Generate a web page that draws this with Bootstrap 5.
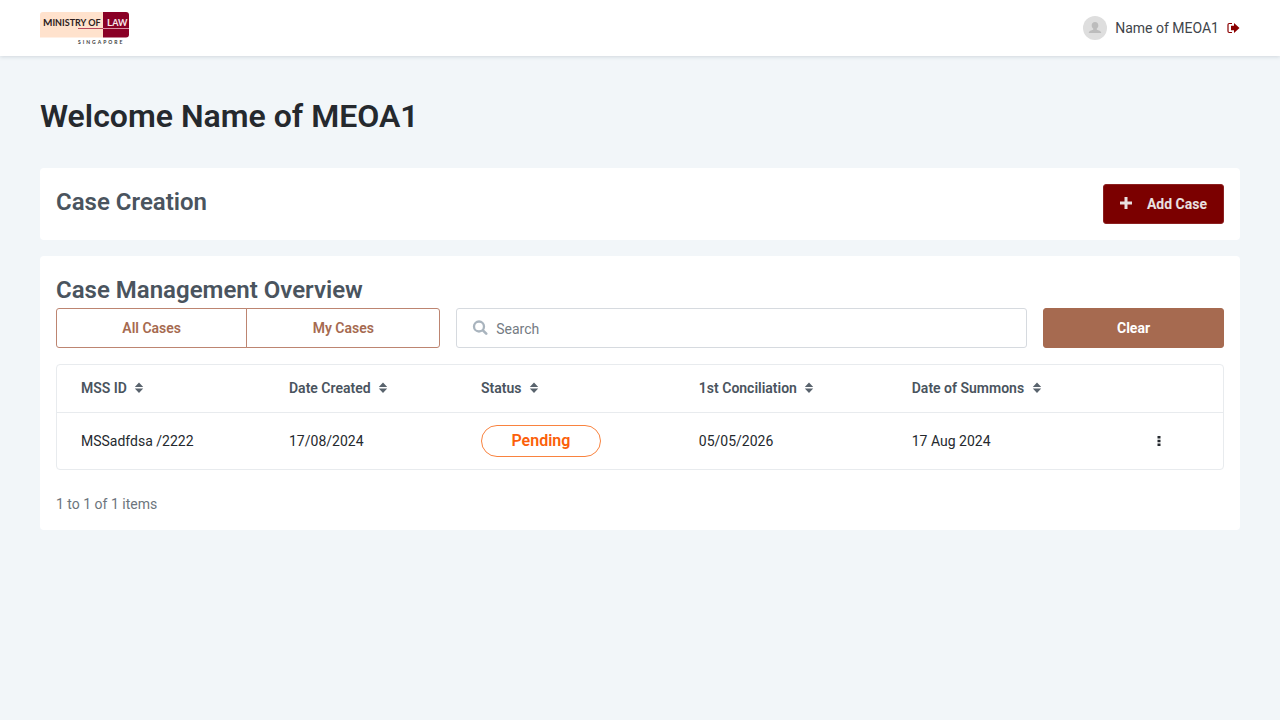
<!DOCTYPE html>
<html lang="en">
<head>
<meta charset="utf-8">
<meta name="viewport" content="width=device-width, initial-scale=1">
<title>Case Management</title>
<link href="https://cdn.jsdelivr.net/npm/bootstrap@5.3.0/dist/css/bootstrap.min.css" rel="stylesheet">
<style>
  body { font-family: Roboto, "Liberation Sans", sans-serif; font-size: 14px; line-height: 24px; color: #25292e; background: #f2f6f9; }
  .topbar { height: 56px; box-shadow: 0 1px 4px rgba(40, 60, 80, .16); }
  .page-gutter { padding-left: 40px; padding-right: 40px; }
  .avatar { width: 24px; height: 24px; }
  .user-name { color: #3f454b; }
  .welcome { font-size: 32px; line-height: 40px; font-weight: 600; margin: 40px 0 32px; }
  .panel { background: #fff; border-radius: 4px; padding: 16px; }
  .panel-title { font-size: 24px; line-height: 36px; font-weight: 600; color: #4a545e; margin: 0; }
  .btn { --bs-btn-font-size: 14px; --bs-btn-font-weight: 600; --bs-btn-border-radius: 3px; --bs-btn-line-height: 24px; height: 40px; }
  .btn-add { --bs-btn-bg: #7b0000; --bs-btn-color: #e9e0e0; --bs-btn-border-color: #8b2020; --bs-btn-hover-bg: #650000; --bs-btn-hover-color: #fff; --bs-btn-padding-x: 16px; font-weight: 700; gap: 15px; }
  .btn-clear { --bs-btn-bg: #a66a50; --bs-btn-color: #fff; --bs-btn-border-color: #a66a50; --bs-btn-hover-bg: #8f5a43; --bs-btn-hover-color: #fff; font-weight: 700; width: 181px; }
  .btn-seg { --bs-btn-color: #a66a50; --bs-btn-border-color: #bd8571; --bs-btn-hover-bg: #f8f0ed; --bs-btn-hover-color: #a66a50; flex: 1 1 0; }
  .filters { gap: 16px; }
  .segments { width: 32.9%; }
  .search-box { height: 40px; border: 1px solid #d6dadf; border-radius: 3px; padding: 0 15px; }
  .search-box input { font-size: 14px; border: 0; outline: 0; background: transparent; padding: 0; margin-top: 2px; }
  .search-box input::placeholder { color: #747b82; opacity: 1; }
  .table-frame { border: 1px solid #e8ebee; border-radius: 4px; }
  .table-frame table { table-layout: fixed; --bs-table-color: #25292e; --bs-table-bg: transparent; }
  .table-frame th { color: #4a545e; font-weight: 600; height: 47px; padding: 0 0 0 24px; border-bottom: 1px solid #e8ebee; vertical-align: middle; }
  .table-frame td { height: 57px; padding: 0 0 0 24px; border: 0; }
  .sort-btn { border: 0; background: none; padding: 0; margin-left: 4px; display: inline-flex; vertical-align: -1px; }
  .pill { display: inline-block; width: 120px; height: 32px; line-height: 30px; border: 1px solid #f9833f; border-radius: 16px; color: #fb5f0a; font-size: 16px; font-weight: 600; text-align: center; vertical-align: middle; }
  .menu-btn { width: 32px; height: 32px; border: 0; background: none; padding: 0; }
  .items-count { color: #6c757d; margin: 22px 0 -2px; line-height: 24px; }
  .logo-words { font-family: Lato, sans-serif; font-weight: 700; }
</style>
</head>
<body>
<svg class="d-none" aria-hidden="true">
  <symbol id="sort" viewBox="0 0 10 12"><path d="M5 .5 9.200 5H.8zM5 11 .8 6.500h8.400z" fill="#59636d"/></symbol>
</svg>

<header class="topbar bg-white page-gutter d-flex align-items-center justify-content-between">
  <a href="#" class="d-block" aria-label="Ministry of Law Singapore">
    <svg class="d-block" width="100" height="36" viewBox="0 0 100 36">
      <path d="M3 2H63V27.500H0V5a3 3 0 0 1 3-3z" fill="#ffe2cd"/>
      <path d="M63 2h23a3 3 0 0 1 3 3v19.500a3 3 0 0 1-3 3H63z" fill="#8a0026"/>
      <path d="M38 18.500h25" stroke="#b8475b"/><path d="M63 18.500h26" stroke="#d994a6"/>
      <g class="logo-words">
        <text x="3" y="16" font-size="10" fill="#2b2020">M<tspan font-size="9">INISTRY OF</tspan></text>
        <text x="67" y="16" font-size="10" fill="#f7e6ea">L<tspan font-size="9">AW</tspan></text>
        <text x="38" y="34" font-size="5" letter-spacing="2" fill="#3a3a3a">SINGAPORE</text>
      </g>
    </svg>
  </a>
  <div class="d-flex align-items-center gap-2">
    <svg class="avatar" viewBox="0 0 24 24"><circle cx="12" cy="12" r="12" fill="#dedede"/><path d="M12 6c2.100 0 3.300 1.400 3.300 3.400 0 1.300-.6 2.500-1.500 3.200v1.200c1.800.5 4.400 1.100 4.400 3.200H5.800c0-2.100 2.600-2.700 4.400-3.200v-1.200c-.9-.7-1.500-1.900-1.500-3.200C8.700 7.400 9.900 6 12 6z" fill="#bcbcbc"/></svg>
    <span class="user-name">Name of MEOA1</span>
    <a href="#" aria-label="Log out" class="d-flex"><svg width="13" height="12" viewBox="0 0 13 12"><path d="M5 1.500H2.200Q1 1.500 1 2.700v6.600q0 1.200 1.200 1.200H5" fill="none" stroke="#8b0000" stroke-width="1.200"/><path d="M4 3.800H7V1L12.500 6 7 11V8.200H4z" fill="#8b0000"/></svg></a>
  </div>
</header>

<main class="page-gutter">
  <h1 class="welcome">Welcome Name of MEOA1</h1>

  <section class="panel d-flex justify-content-between align-items-start mb-3">
    <h2 class="panel-title">Case Creation</h2>
    <button type="button" class="btn btn-add d-flex align-items-center">
      <svg width="12" height="14" viewBox="0 0 12 14"><path d="M4.500 0h3v4.500H12v3H7.500V12h-3V7.500H0v-3h4.500z" fill="#e9e0e0"/></svg>Add Case
    </button>
  </section>

  <section class="panel">
    <h2 class="panel-title">Case Management Overview</h2>
    <div class="filters d-flex mb-3">
      <div class="btn-group segments" role="group" aria-label="Case filter">
        <button type="button" class="btn btn-seg">All Cases</button>
        <button type="button" class="btn btn-seg">My Cases</button>
      </div>
      <div class="search-box d-flex align-items-center gap-2 flex-grow-1">
        <svg width="16" height="16" viewBox="0 0 16 16" fill="none" stroke="#a9b4be"><circle cx="7" cy="6.500" r="5" stroke-width="2.300"/><path d="m10.900 10.400 3.300 3.300" stroke-width="2.600" stroke-linecap="round"/></svg>
        <input type="text" class="flex-grow-1" placeholder="Search" aria-label="Search">
      </div>
      <button type="button" class="btn btn-clear">Clear</button>
    </div>
    <div class="table-frame">
      <table class="table mb-0 align-middle">
        <colgroup><col style="width:17.840%"><col style="width:16.460%"><col style="width:18.690%"><col style="width:18.260%"><col style="width:19.830%"><col></colgroup>
        <thead>
          <tr>
            <th scope="col">MSS ID <button class="sort-btn" aria-label="Sort by MSS ID"><svg width="10" height="12"><use href="#sort"/></svg></button></th>
            <th scope="col">Date Created <button class="sort-btn" aria-label="Sort by date created"><svg width="10" height="12"><use href="#sort"/></svg></button></th>
            <th scope="col">Status <button class="sort-btn" aria-label="Sort by status"><svg width="10" height="12"><use href="#sort"/></svg></button></th>
            <th scope="col">1st Conciliation <button class="sort-btn" aria-label="Sort by conciliation"><svg width="10" height="12"><use href="#sort"/></svg></button></th>
            <th scope="col">Date of Summons <button class="sort-btn" aria-label="Sort by summons"><svg width="10" height="12"><use href="#sort"/></svg></button></th>
            <th></th>
          </tr>
        </thead>
        <tbody>
          <tr>
            <td>MSSadfdsa /2222</td>
            <td>17/08/2024</td>
            <td><span class="pill">Pending</span></td>
            <td>05/05/2026</td>
            <td>17 Aug 2024</td>
            <td><button type="button" class="menu-btn d-flex align-items-center justify-content-center" aria-label="Row actions"><svg width="4" height="10" viewBox="0 0 4 10" fill="#25292e"><path d="M.5 0h3v2.500h-3zM.5 3.700h3v2.500h-3zM.5 7.400h3v2.500h-3z"/></svg></button></td>
          </tr>
        </tbody>
      </table>
    </div>
    <p class="items-count">1 to 1 of 1 items</p>
  </section>
</main>
<script src="https://cdn.jsdelivr.net/npm/bootstrap@5.3.0/dist/js/bootstrap.bundle.min.js"></script>
</body>
</html>
